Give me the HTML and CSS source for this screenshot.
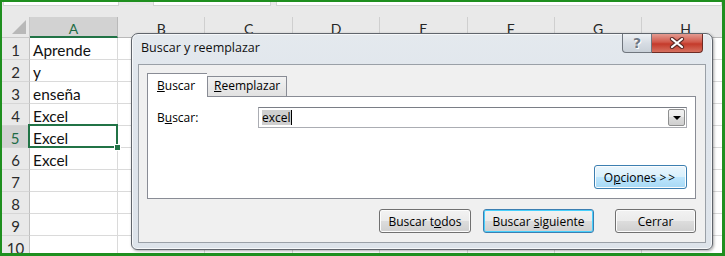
FILE: index.html
```html
<!DOCTYPE html>
<html>
<head>
  <meta charset="utf-8">
  <link rel="stylesheet" href="styles.css">
</head>
<body>
<div class="window">
  <div class="formula-strip">
    <span class="strip-box box-name"></span>
    <span class="strip-box box-fx"></span>
    <span class="strip-box box-formula"></span>
  </div>

  <div class="grid">
    <div class="corner"></div>
    <div class="col-head selected">A</div>
    <div class="col-head">B</div>
    <div class="col-head">C</div>
    <div class="col-head">D</div>
    <div class="col-head">E</div>
    <div class="col-head">F</div>
    <div class="col-head">G</div>
    <div class="col-head">H</div>
  </div>
  <div class="grid rows" id="rows">
    <!-- filas generadas por el script -->
  </div>

  <div class="dialog">
    <div class="titlebar">Buscar y reemplazar</div>
    <div class="win-buttons">
      <span class="win-btn help">?</span>
      <span class="win-btn close">
        <svg width="16" height="12" viewBox="0 0 16 12">
          <path d="M3 2 L13 10 M13 2 L3 10" stroke="#5b2a26" stroke-width="4.2" stroke-linecap="round"/>
          <path d="M3 2 L13 10 M13 2 L3 10" stroke="#ffffff" stroke-width="2.2" stroke-linecap="round"/>
        </svg>
      </span>
    </div>

    <div class="client">
      <div class="tabs">
        <span class="tab active"><u>B</u>uscar</span>
        <span class="tab"><u>R</u>eemplazar</span>
      </div>
      <div class="tab-page">
        <div class="find-row">
          <label class="find-label">B<u>u</u>scar:</label>
          <div class="combo">
            <span class="combo-text"><span class="sel">excel</span><span class="caret"></span></span>
            <span class="combo-arrow"></span>
          </div>
        </div>
        <div class="options-row">
          <button class="btn hot">O<u>p</u>ciones <span class="arrows">&gt;&gt;</span></button>
        </div>
      </div>
      <div class="button-row">
        <button class="btn btn-todos">Buscar t<u>o</u>dos</button>
        <button class="btn btn-default">Buscar <u>s</u>iguiente</button>
        <button class="btn btn-close">Cerrar</button>
      </div>
    </div>
  </div>
</div>

<script>
  const datos = ['Aprende', 'y', 'enseña', 'Excel', 'Excel', 'Excel', '', '', '', ''];
  const filas = document.getElementById('rows');
  let html = '';
  for (let i = 0; i < datos.length; i++) {
    const sel = i === 4 ? ' selected' : '';
    html += `<div class="row-head${sel}">${i + 1}</div>`;
    html += `<div class="cell${sel}">${datos[i]}</div>`;
    for (let j = 0; j < 7; j++) {
      html += '<div class="cell"></div>';
    }
  }
  filas.innerHTML = html;
</script>
</body>
</html>
```

FILE: styles.css
```css
body {
  margin: 0;
  width: 725px;
  height: 256px;
  overflow: hidden;
  background: #ffffff;
}

.window {
  position: relative;
  width: 725px;
  height: 256px;
  box-sizing: border-box;
  border: 2px solid #1f8f1f;
  border-right-width: 3px;
  border-bottom-width: 3px;
  overflow: hidden;
  background: #e9e9e9;
  font-family: Lato, "Liberation Sans", sans-serif;
}

/* Barra de fórmulas cortada arriba */
.formula-strip {
  display: flex;
  height: 15px;
  background: #e9e9e9;
}

.strip-box {
  height: 3px;
  background: #ffffff;
  border: 1px solid #d4d4d4;
  border-top: none;
}

.box-name { margin-left: 1px; width: 114px; }
.box-fx { margin-left: 34px; width: 116px; }
.box-formula { margin-left: 5px; flex: 1; }

/* Hoja de cálculo */
.grid {
  display: grid;
  grid-template-columns: 28px 88px repeat(7, 87.4px);
  grid-auto-rows: 21px;
}

.grid.rows {
  grid-auto-rows: 22px;
  background: #ffffff;
}

.corner {
  position: relative;
  background: #e9e9e9;
  border-right: 1px solid #c9c9c9;
  border-bottom: 1px solid #c9c9c9;
}

.corner::after {
  content: "";
  position: absolute;
  right: 3px;
  bottom: 3px;
  width: 0;
  height: 0;
  border-left: 14px solid transparent;
  border-bottom: 14px solid #b8b8b8;
}

.col-head {
  box-sizing: border-box;
  background: #e9e9e9;
  border-right: 1px solid #cfcfcf;
  border-bottom: 1px solid #b9b9b9;
  text-align: center;
  font-size: 14px;
  line-height: 24px;
  color: #262626;
}

.col-head.selected {
  background: #d2d2d2;
  color: #1e6b45;
  border-bottom: 2px solid #217346;
  border-right-color: #b9b9b9;
}

.row-head {
  box-sizing: border-box;
  background: #e9e9e9;
  border-right: 1px solid #c0c0c0;
  border-bottom: 1px solid #d6d6d6;
  text-align: center;
  font-size: 15px;
  line-height: 24px;
  color: #2b2b2b;
}

.row-head.selected {
  background: #d2d2d2;
  color: #1e6b45;
  border-right: 2px solid #217346;
}

.cell {
  position: relative;
  box-sizing: border-box;
  border-right: 1px solid #dadada;
  border-bottom: 1px solid #dadada;
  padding-left: 3px;
  font-size: 15.4px;
  line-height: 24px;
  color: #111111;
  white-space: nowrap;
}

.cell.selected::after {
  content: "";
  position: absolute;
  left: -2px;
  top: -2px;
  right: -1px;
  bottom: -1px;
  border: 2px solid #217346;
}

.cell.selected::before {
  content: "";
  position: absolute;
  right: -4px;
  bottom: -4px;
  width: 5px;
  height: 5px;
  background: #217346;
  border: 1px solid #ffffff;
  z-index: 2;
}

/* Cuadro de diálogo */
.dialog {
  position: absolute;
  left: 129px;
  top: 31px;
  width: 582px;
  height: 217px;
  box-sizing: border-box;
  border: 1px solid #60656c;
  border-radius: 7px 7px 6px 6px;
  background: linear-gradient(#e4e9ee, #dfe5ec 30%, #dde3ea);
  box-shadow: 1px 1px 3px rgba(0, 0, 0, 0.35), inset 0 0 0 1px #f6f8fa;
  padding: 0 6px 6px;
  display: flex;
  flex-direction: column;
  font-family: "Open Sans", "Noto Sans", sans-serif;
  font-size: 12px;
  color: #000000;
}

.titlebar {
  height: 30px;
  line-height: 28px;
  padding-left: 3px;
  font-size: 12.5px;
  color: #111111;
}

.win-buttons {
  position: absolute;
  top: 0;
  right: 9px;
  display: flex;
}

.win-btn {
  display: flex;
  align-items: center;
  justify-content: center;
  height: 19px;
  box-sizing: border-box;
  border: 1px solid #70767e;
  border-top: none;
}

.win-btn.help {
  width: 30px;
  border-radius: 0 0 0 4px;
  background: linear-gradient(#eef1f4, #d7dde4 50%, #c9d0d8);
  font-family: "DejaVu Sans", sans-serif;
  font-weight: bold;
  font-size: 14px;
  color: #6e7884;
  text-shadow: 0 0 1px #ffffff, 1px 1px 0 #ffffff;
}

.win-btn.close {
  width: 51px;
  border-left: none;
  border-color: #6d2b25;
  border-radius: 0 0 4px 0;
  background: linear-gradient(#e39b91, #d1584a 45%, #c43a2b 55%, #d6705f);
}

.client {
  flex: 1;
  border: 1px solid #9aa0a7;
  background: #f0f0f0;
  padding: 8px 9px 8px 8px;
  display: flex;
  flex-direction: column;
}

.tabs {
  display: flex;
  align-items: flex-end;
  height: 23px;
  position: relative;
  z-index: 1;
}

.tab {
  box-sizing: border-box;
  height: 20px;
  padding: 0 6px;
  line-height: 18px;
  border: 1px solid #898c95;
  border-bottom: none;
  background: linear-gradient(#f2f2f2, #e1e1e1);
  margin-bottom: 0;
}

.tab.active {
  height: 24px;
  margin-bottom: -1px;
  width: 60px;
  padding: 0 0 0 9px;
  line-height: 24px;
  background: #ffffff;
  border-right: none;
}

.tab + .tab {
  width: 80px;
  padding-left: 6px;
}

.tab-page {
  height: 103px;
  box-sizing: border-box;
  border: 1px solid #898c95;
  background: #ffffff;
  padding: 10px 8px 9px 9px;
  display: flex;
  flex-direction: column;
  justify-content: space-between;
}

.find-row {
  display: flex;
  align-items: center;
}

.find-label {
  width: 101px;
}

.combo {
  flex: 1;
  height: 21px;
  box-sizing: border-box;
  border: 1px solid #abadb3;
  border-top-color: #7a7e86;
  display: flex;
  align-items: center;
  padding: 0 1px 0 3px;
}

.combo-text {
  flex: 1;
  display: flex;
  align-items: center;
}

.sel {
  background: #cfcfcf;
  line-height: 15px;
}

.caret {
  width: 1px;
  height: 15px;
  background: #000000;
}

.combo-arrow {
  position: relative;
  width: 17px;
  height: 17px;
  box-sizing: border-box;
  border: 1px solid #8e8f8f;
  border-radius: 2px;
  background: linear-gradient(#f2f2f2, #ebebeb 50%, #dcdcdc 50%, #cfcfcf);
}

.combo-arrow::after {
  content: "";
  position: absolute;
  left: 4px;
  top: 6px;
  border-left: 4px solid transparent;
  border-right: 4px solid transparent;
  border-top: 4px solid #000000;
}

.options-row {
  display: flex;
  justify-content: flex-end;
}

.btn {
  height: 24px;
  box-sizing: border-box;
  border: 1px solid #707070;
  border-radius: 3px;
  background: linear-gradient(#f2f2f2, #ebebeb 50%, #dddddd 50%, #cfcfcf);
  box-shadow: inset 0 0 0 1px #fcfcfc;
  font-family: "Open Sans", "Noto Sans", sans-serif;
  font-size: 12px;
  color: #000000;
  padding: 0;
  margin: 0;
}

.btn.hot {
  width: 93px;
  border-color: #3c7fb1;
  background: linear-gradient(#eaf6fd, #d9f0fc 50%, #bee6fd 50%, #a7d9f5);
}

.arrows {
  letter-spacing: 2px;
}

.button-row {
  display: flex;
  justify-content: flex-end;
  margin-top: 10px;
}

.btn-todos {
  width: 92px;
}

.btn-default {
  width: 111px;
  margin-left: 12px;
  border-color: #3c7fb1;
  box-shadow: inset 0 0 0 1px #48d0fc;
}

.btn-close {
  width: 81px;
  margin-left: 21px;
}
```
